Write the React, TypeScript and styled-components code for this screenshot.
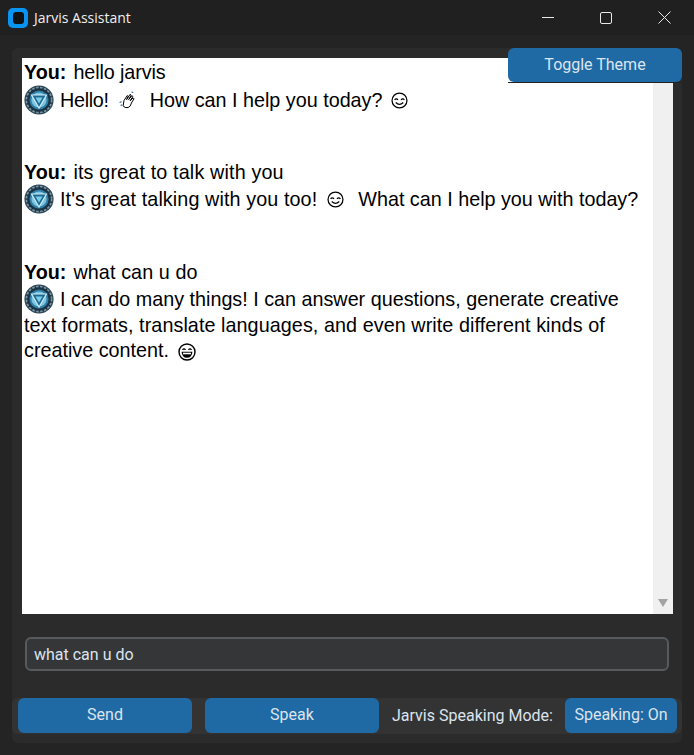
import React from "react";
import styled, { createGlobalStyle } from "styled-components";

const Global = createGlobalStyle`
  html, body { margin: 0; padding: 0; background: #242424; }
  body { width: 694px; height: 755px; overflow: hidden; font-family: Roboto, sans-serif; }
`;
const Win = styled.div`
  width: 694px; height: 755px; display: flex; flex-direction: column; position: relative; background: #242424;
`;
const TitleBar = styled.div`
  height: 35px; background: #202020; display: flex; align-items: center; flex: none;
`;
const AppLogo = styled.svg`
  width: 20px; height: 20px; margin: 0 6px 0 8px; flex: none;
`;
const Title = styled.div`
  font: 14px "Open Sans", "Noto Sans", sans-serif; color: #f0f0f0; flex: 1; margin-top: -1px;
`;
const WinBtn = styled.div`
  width: 58.5px; height: 35px; display: flex; align-items: center; justify-content: center; flex: none;
`;
const Frame = styled.div`
  margin: 13px 12px 12px 12px; height: 695px; background: #2b2b2b; border-radius: 6px;
  display: flex; flex-direction: column; flex: none;
`;
const ChatWrap = styled.div`
  margin: 10px 9px 0 10px; height: 556px; background: #fff; display: flex; flex: none;
`;
const Chat = styled.div`
  flex: 1; padding: 2px 0 0 2px; font: 19.75px/25px "Liberation Sans", Arial, sans-serif; color: #000;
  overflow: hidden;
`;
const Line = styled.div<{ $h?: number }>`
  height: ${(p) => p.$h ?? 25}px; white-space: nowrap; display: flex; align-items: center;
`;
const Msg = styled.div<{ $mb: number }>`
  margin-bottom: ${(p) => p.$mb}px;
`;
const Wrapped = styled.div`
  line-height: 25px;
`;
const Bold = styled.b`
  font-weight: 700; margin-right: 7px;
`;
const Text = styled.span<{ $ls?: number }>`
  white-space: pre; letter-spacing: ${(p) => p.$ls ?? 0}px;
`;
const Inline = styled.svg<{ $l?: number; $r?: number }>`
  flex: none; vertical-align: middle; margin-left: ${(p) => p.$l ?? 0}px; margin-right: ${(p) => p.$r ?? 0}px;
`;
const Scroll = styled.div`
  width: 20px; background: #f0f0f0; display: flex; align-items: flex-end; justify-content: center; padding-bottom: 7px; box-sizing: border-box;
`;
const Entry = styled.div`
  margin: 23px 0 0 13px; width: 644px; height: 34px; box-sizing: border-box; flex: none;
  background: #343638; border: 2px solid #565b5e; border-radius: 6px;
  color: #dce4ee; font-size: 16px; display: flex; align-items: center; padding-left: 7px;
`;
const Bottom = styled.div`
  margin-top: 27px; height: 35px; background: #333333; border-radius: 6px; display: flex; align-items: stretch; flex: none; padding: 0 5px 1px 6px;
`;
const Btn = styled.div<{ $w: number; $ml?: number }>`
  width: ${(p) => p.$w}px; margin-left: ${(p) => p.$ml ?? 0}px; background: #1f6aa5; border-radius: 6px;
  color: #dce4ee; font-size: 16px; display: flex; align-items: center; justify-content: center; flex: none; padding-bottom: 2px; box-sizing: border-box;
`;
const Label = styled.div`
  color: #dce4ee; font-size: 16px; display: flex; align-items: center; margin-left: 13px; width: 173px; flex: none; white-space: nowrap;
`;
const Toggle = styled(Btn)`
  position: absolute; left: 508px; top: 48px; height: 34px; padding-bottom: 1px;
  &::after { content: ""; position: absolute; left: 0; right: 0; bottom: -1px; height: 1px; background: #222; }
`;

const Reactor = () => (
  <Inline width="30" height="30" viewBox="0 0 30 30" $r={6}>
    <circle cx="15" cy="15" r="14.6" fill="#2f4756" />
    <circle cx="15" cy="15" r="12.6" fill="#1b3342" stroke="#7b98a8" strokeWidth="1.6" strokeDasharray="2.5 1.5" />
    <circle cx="15" cy="15" r="9.6" fill="#2f7fa8" />
    <circle cx="15" cy="15" r="7.6" fill="#7cc4e0" />
    <path d="M7.5 10H22.5L15 23Z" fill="#1f6a92" stroke="#c9edf9" strokeWidth="1.2" />
    <path d="M11.5 12.5H18.5L15 18.5Z" fill="#7ccbe8" />
  </Inline>
);
const Smile = ({ l, r }: { l?: number; r?: number }) => (
  <Inline width="17" height="17" viewBox="0 0 18 18" $l={l} $r={r}>
    <circle cx="9" cy="9" r="7.9" fill="none" stroke="#000" strokeWidth="1.3" />
    <path d="M3.8 8.4q1.8-2.4 3.6 0M10.6 8.4q1.8-2.4 3.6 0" fill="none" stroke="#000" strokeWidth="1.3" />
    <path d="M5 11.2q4 3.6 8 0" fill="none" stroke="#000" strokeWidth="1.3" />
  </Inline>
);
const Grin = () => (
  <Inline width="18" height="18" viewBox="0 0 18 18" $l={4}>
    <circle cx="9" cy="9" r="8" fill="none" stroke="#000" strokeWidth="1.4" />
    <path d="M4.5 6.8q1.5-2 3 0M10.5 6.8q1.5-2 3 0" fill="none" stroke="#000" strokeWidth="1.3" />
    <path d="M3.6 8.8h10.8q-.4 6-5.4 6t-5.4-6Z" fill="#000" />
    <path d="M5 9.7h8v1.6H5Z" fill="#fff" />
  </Inline>
);
const Wave = () => (
  <Inline width="18" height="18" viewBox="0 0 18 18" $l={10} $r={13}>
    <path d="M5 9.5 8.2 4.6l1 .7L7.6 8.6 11 3.4l1.2.8-2.6 4.4 3.3-3.9 1 .9-2.8 4.1 3-2.8.9.9-2.6 4.2q-.5 3.5-3.3 4.6-3.4.6-5-1.7Z" fill="#fff" stroke="#000" strokeWidth="1" strokeLinejoin="round" />
    <path d="M.6 11.6l2-.9M1.6 14.6l1.6-.9M12.5 1l1.8.6" stroke="#2a66b0" strokeWidth="1.1" fill="none" />
  </Inline>
);

export default function App() {
  return (
    <Win>
      <Global />
      <TitleBar>
        <AppLogo viewBox="0 0 20 20">
          <rect width="20" height="20" rx="5" fill="#0a94f2" />
          <rect x="5" y="4" width="11" height="12" rx="3" fill="#111" />
        </AppLogo>
        <Title>Jarvis Assistant</Title>
        <WinBtn>
          <svg width="12" height="12" viewBox="0 0 12 12"><path d="M0 5.5h12" stroke="#e8e8e8" strokeWidth="1" /></svg>
        </WinBtn>
        <WinBtn>
          <svg width="12" height="12" viewBox="0 0 12 12"><rect x=".5" y=".5" width="11" height="11" rx="1.5" fill="none" stroke="#e8e8e8" /></svg>
        </WinBtn>
        <WinBtn>
          <svg width="13" height="13" viewBox="0 0 13 13"><path d="M.5.5l12 12M12.5.5l-12 12" stroke="#e8e8e8" strokeWidth="1" /></svg>
        </WinBtn>
      </TitleBar>
      <Frame>
        <ChatWrap>
          <Chat>
            <Msg $mb={45}>
              <Line><Bold>You:</Bold><Text $ls={-0.1}>hello jarvis</Text></Line>
              <Line $h={30}><Reactor /><Text $ls={-0.3}>Hello!</Text><Wave /><Text>How can I help you today?</Text><Smile l={9} /></Line>
            </Msg>
            <Msg $mb={47}>
              <Line><Bold>You:</Bold><Text $ls={0.15}>its great to talk with you</Text></Line>
              <Line $h={28}><Reactor /><Text $ls={0.1}>It's great talking with you too!</Text><Smile l={10} r={14} /><Text>What can I help you with today?</Text></Line>
            </Msg>
            <Msg $mb={0}>
              <Line><Bold>You:</Bold><Text $ls={0.1}>what can u do</Text></Line>
              <Line $h={28}><Reactor /><Text>I can do many things! I can answer questions, generate creative</Text></Line>
              <Wrapped>
                <Text $ls={0.07}>text formats, translate languages, and even write different kinds of</Text>
                <br />
                <Text>creative content. </Text><Grin />
              </Wrapped>
            </Msg>
          </Chat>
          <Scroll>
            <svg width="10" height="8" viewBox="0 0 10 8"><path d="M0 0h10L5 8Z" fill="#a3a3a3" /></svg>
          </Scroll>
        </ChatWrap>
        <Entry>what can u do</Entry>
        <Bottom>
          <Btn $w={174}>Send</Btn>
          <Btn $w={174} $ml={13}>Speak</Btn>
          <Label>Jarvis Speaking Mode:</Label>
          <Btn $w={112}>Speaking: On</Btn>
        </Bottom>
      </Frame>
      <Toggle $w={174}>Toggle Theme</Toggle>
    </Win>
  );
}
